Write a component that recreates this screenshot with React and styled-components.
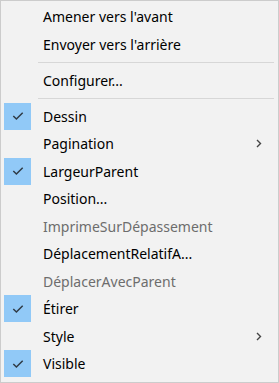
import React from "react";
import styled, { createGlobalStyle } from "styled-components";

const GlobalStyle = createGlobalStyle`
  html, body {
    margin: 0;
    padding: 0;
    background: #ffffff;
  }
`;

const items = [
  { label: "Amener vers l'avant" },
  { label: "Envoyer vers l'arrière" },
  { separator: true },
  { label: "Configurer..." },
  { separator: true },
  { label: "Dessin", checked: true },
  { label: "Pagination", submenu: true },
  { label: "LargeurParent", checked: true },
  { label: "Position..." },
  { label: "ImprimeSurDépassement", disabled: true },
  { label: "DéplacementRelatifA..." },
  { label: "DéplacerAvecParent", disabled: true },
  { label: "Étirer", checked: true },
  { label: "Style", submenu: true },
  { label: "Visible", checked: true },
];

function Check() {
  return (
    <svg width="12" height="10" viewBox="0 0 12 10">
      <path
        d="M1.3 5 L4.4 8 L10.7 1.7"
        fill="none"
        stroke="#2f3a45"
        strokeWidth="1.5"
      />
    </svg>
  );
}

function Chevron() {
  return (
    <svg width="6" height="9" viewBox="0 0 6 9">
      <path d="M1 1 L4.5 4.5 L1 8" fill="none" stroke="#444" strokeWidth="1.4" />
    </svg>
  );
}

export default function App() {
  return (
    <>
      <GlobalStyle />
      <Menu>
        {items.map((item, i) =>
          item.separator ? (
            <Separator key={i} />
          ) : (
            <Row key={i}>
              <Gutter>{item.checked && <CheckBox><Check /></CheckBox>}</Gutter>
              <Label $disabled={item.disabled}>{item.label}</Label>
              <Arrow>{item.submenu && <Chevron />}</Arrow>
            </Row>
          )
        )}
      </Menu>
    </>
  );
}

const Menu = styled.div`
  box-sizing: border-box;
  width: 279px;
  height: 383px;
  background: #f2f2f2;
  border: 1px solid #cccccc;
  padding: 2px 2px 3px 2px;
  display: flex;
  flex-direction: column;
  font-family: "Noto Sans", "Open Sans", sans-serif;
  font-size: 14px;
`;

const Row = styled.div`
  height: 27.5px;
  display: flex;
  align-items: center;
  flex-shrink: 0;
`;

const Gutter = styled.div`
  width: 40px;
  height: 100%;
  display: flex;
  align-items: center;
  padding-left: 1px;
  box-sizing: border-box;
`;

const CheckBox = styled.div`
  width: 27px;
  height: 27px;
  background: #91c9f7;
  display: flex;
  align-items: center;
  justify-content: center;
`;

const Label = styled.span`
  flex: 1;
  color: ${({ $disabled }) => ($disabled ? "#6d6d6d" : "#000000")};
  white-space: nowrap;
`;

const Arrow = styled.div`
  width: 20px;
  display: flex;
  align-items: center;
  justify-content: flex-start;
`;

const Separator = styled.div`
  height: 8.5px;
  flex-shrink: 0;
  display: flex;
  align-items: center;
  padding-left: 35px;
  padding-right: 2px;
  &::after {
    content: "";
    flex: 1;
    height: 1px;
    background: #d7d7d7;
  }
`;
